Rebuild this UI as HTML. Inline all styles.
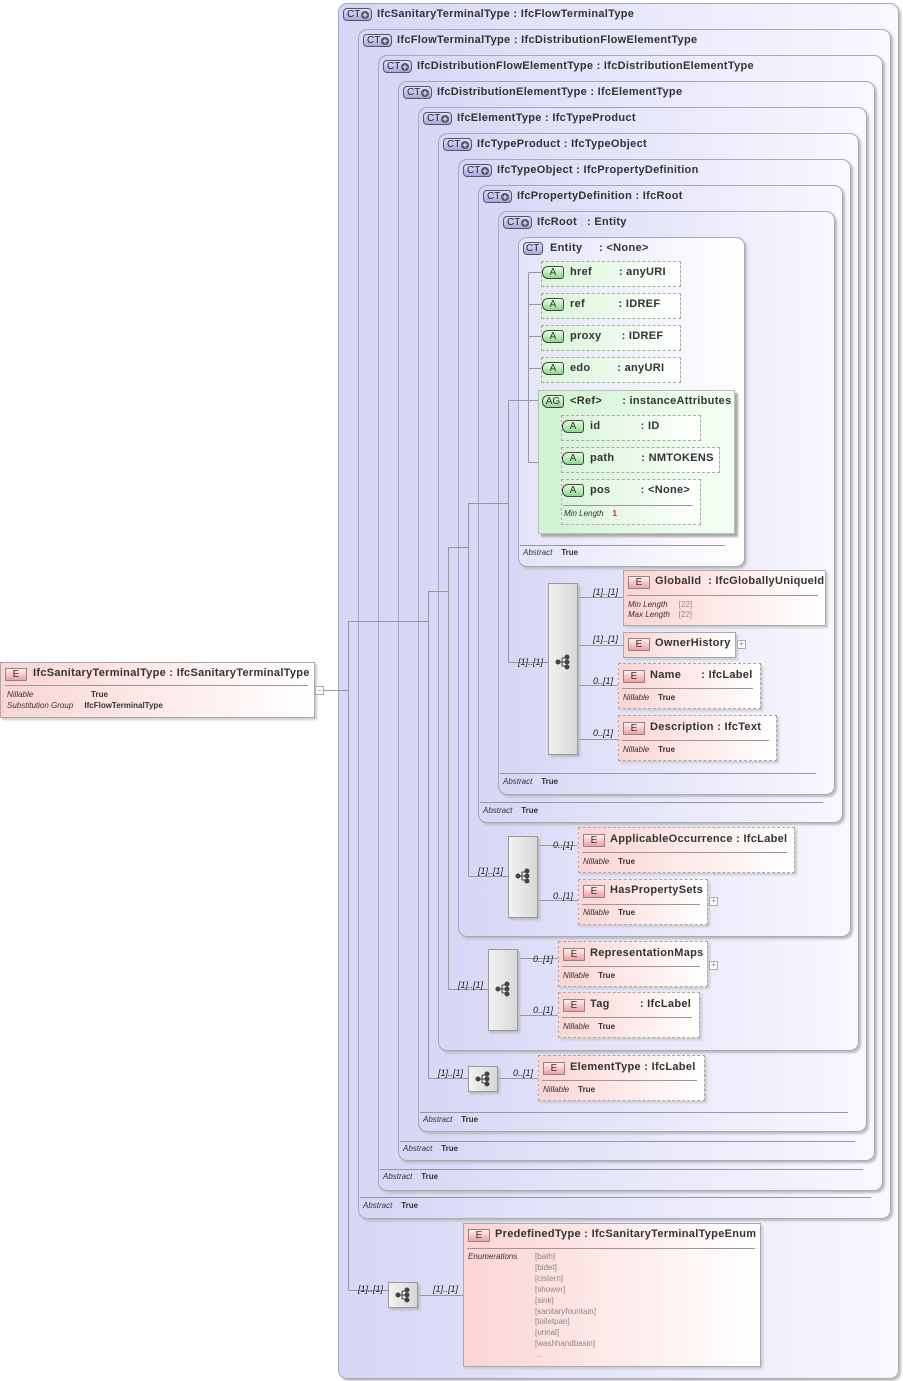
<!DOCTYPE html>
<html><head><meta charset="utf-8"><style>
*{margin:0;padding:0;box-sizing:border-box}
body{width:903px;height:1381px;background:#fff;position:relative;overflow:hidden;font-family:"Liberation Sans",sans-serif;font-size:11px;font-weight:bold;color:#333}
.ct{position:absolute;border:1px solid #a8a8b8;border-radius:9px;background:linear-gradient(to right,#d6d6f6,#f8f8ff);box-shadow:2px 2px 2px #bbb}
.h{position:absolute;white-space:pre;line-height:13px;margin-top:1px;letter-spacing:0.3px}
.bct{position:absolute;width:29px;height:13px;border:1px solid #556;border-radius:4px;background:linear-gradient(#e0e0fa,#a8a8e0);font-size:10px;font-weight:normal;color:#223;line-height:11px;padding-left:3px}
.bct b{position:absolute;right:2px;top:2px;width:8px;height:8px;border-radius:50%;background:#556;color:#fff;font-size:9px;line-height:8px;text-align:center}
.el{position:absolute;border:1px solid #aaa;background:linear-gradient(to right,#fcd4d4,#fff);box-shadow:2px 2px 2px #ccc}
.el.d{border:1px dashed #aaa}
.be{position:absolute;width:22px;height:13px;border:1px solid #888;background:linear-gradient(#fff0f0,#f0a0a0);font-size:10px;font-weight:normal;text-align:center;line-height:11px;color:#333}
.at{position:absolute;border:1px dashed #aaa;background:linear-gradient(to right,#d8f4d8,#fff)}
.ba{position:absolute;width:22px;height:13px;border:1px solid #444;border-radius:6px 3px 3px 6px;background:linear-gradient(#e8ffe8,#8ed88e);font-size:10px;font-weight:normal;text-align:center;line-height:11px}
.sm{position:absolute;font-size:8px;white-space:pre;line-height:10px;margin-top:1px}
.sm i{font-style:italic;font-weight:normal}
.seq{position:absolute;border:1px solid #999;background:linear-gradient(to right,#f2f2f2,#d8d8d8);box-shadow:2px 2px 2px #bbb}
.card{position:absolute;font-size:9px;font-style:italic;font-weight:normal;color:#222}
.pl{position:absolute;width:9px;height:9px;border:1px solid #aaa;background:#fff;font-size:9px;line-height:7px;text-align:center;color:#888;font-weight:normal}
</style></head><body>

<div class="ct" style="left:338px;top:3px;width:561px;height:1376px"></div>
<div class="ct" style="left:358px;top:29px;width:533px;height:1190px"></div>
<div class="ct" style="left:378px;top:55px;width:505px;height:1136px"></div>
<div class="ct" style="left:398px;top:81px;width:477px;height:1080px"></div>
<div class="ct" style="left:418px;top:107px;width:449px;height:1025px"></div>
<div class="ct" style="left:438px;top:133px;width:421px;height:918px"></div>
<div class="ct" style="left:458px;top:159px;width:393px;height:778px"></div>
<div class="ct" style="left:478px;top:185px;width:365px;height:638px"></div>
<div class="ct" style="left:498px;top:211px;width:337px;height:584px"></div>
<div class="ct" style="left:518px;top:237px;width:227px;height:330px;background:linear-gradient(to right,#e4e4fa,#fff)"></div>

<svg style="position:absolute;left:0;top:0" width="903" height="1381">
<g stroke="#999" fill="none" stroke-width="1">
<path d="M323.5 690.5H348.5M348.5 1290.5V621.5H428.5M428.5 1078.5V591.5H448.5M448.5 989.5V547.5H468.5M468.5 876.5V503.5H508.5M508.5 662.5V400.5H528.5M528.5 462.5V272.5"/>
<path d="M348.5 1290.5H388.5M418.5 1295.5H463.5M428.5 1078.5H468.5M498.5 1078.5H538.5M448.5 989.5H488.5M518.5 958.5H558.5M518.5 1015.5H558.5M468.5 876.5H508.5M538.5 845.5H578.5M538.5 900.5H578.5M508.5 662.5H548.5M578.5 597.5H623.5M578.5 645.5H623.5M578.5 685.5H618.5M578.5 739.5H618.5"/>
<path d="M528.5 272.5H541.5M528.5 304.5H541.5M528.5 336.5H541.5M528.5 368.5H541.5M528.5 400.5H541.5M528.5 462.5H548.5M548.5 430.5V502.5M548.5 428.5H561.5M548.5 460.5H561.5M548.5 492.5H561.5"/>
<path d="M420 1112.5H848M400 1141.5H855M380 1169.5H863M360 1197.5H871M500 773.5H816M520 545.5H725M480 802.5H823"/>
</g></svg>

<div class="bct" style="left:343px;top:8px">CT<b>+</b></div><div class="h" style="left:377px;top:7px">IfcSanitaryTerminalType : IfcFlowTerminalType</div>
<div class="bct" style="left:363px;top:34px">CT<b>+</b></div><div class="h" style="left:397px;top:33px">IfcFlowTerminalType : IfcDistributionFlowElementType</div>
<div class="bct" style="left:383px;top:60px">CT<b>+</b></div><div class="h" style="left:417px;top:59px">IfcDistributionFlowElementType : IfcDistributionElementType</div>
<div class="bct" style="left:403px;top:86px">CT<b>+</b></div><div class="h" style="left:437px;top:85px">IfcDistributionElementType : IfcElementType</div>
<div class="bct" style="left:423px;top:112px">CT<b>+</b></div><div class="h" style="left:457px;top:111px">IfcElementType : IfcTypeProduct</div>
<div class="bct" style="left:443px;top:138px">CT<b>+</b></div><div class="h" style="left:477px;top:137px">IfcTypeProduct : IfcTypeObject</div>
<div class="bct" style="left:463px;top:164px">CT<b>+</b></div><div class="h" style="left:497px;top:163px">IfcTypeObject : IfcPropertyDefinition</div>
<div class="bct" style="left:483px;top:190px">CT<b>+</b></div><div class="h" style="left:517px;top:189px">IfcPropertyDefinition : IfcRoot</div>
<div class="bct" style="left:503px;top:216px">CT<b>+</b></div><div class="h" style="left:537px;top:215px">IfcRoot   : Entity</div>
<div class="bct" style="left:523px;top:242px;width:20px;padding-left:2px;">CT</div><div class="h" style="left:550px;top:241px">Entity     : &lt;None&gt;</div>

<div class="sm" style="left:523px;top:547px"><i>Abstract</i>    True</div>
<div class="sm" style="left:503px;top:776px"><i>Abstract</i>    True</div>
<div class="sm" style="left:483px;top:805px"><i>Abstract</i>    True</div>
<div class="sm" style="left:423px;top:1114px"><i>Abstract</i>    True</div>
<div class="sm" style="left:403px;top:1143px"><i>Abstract</i>    True</div>
<div class="sm" style="left:383px;top:1171px"><i>Abstract</i>    True</div>
<div class="sm" style="left:363px;top:1200px"><i>Abstract</i>    True</div>

<div class="at" style="left:541px;top:261px;width:140px;height:26px"></div><div class="ba" style="left:542px;top:266px">A</div><div class="h" style="left:570px;top:265px">href        : anyURI</div>
<div class="at" style="left:541px;top:293px;width:140px;height:26px"></div><div class="ba" style="left:542px;top:298px">A</div><div class="h" style="left:570px;top:297px">ref          : IDREF</div>
<div class="at" style="left:541px;top:325px;width:140px;height:26px"></div><div class="ba" style="left:542px;top:330px">A</div><div class="h" style="left:570px;top:329px">proxy      : IDREF</div>
<div class="at" style="left:541px;top:357px;width:140px;height:26px"></div><div class="ba" style="left:542px;top:362px">A</div><div class="h" style="left:570px;top:361px">edo        : anyURI</div>
<div style="position:absolute;left:538px;top:390px;width:197px;height:144px;border:1px solid #bbb;background:linear-gradient(to right,#d0f4d0,#f4fff4);box-shadow:3px 3px 2px #aaa"></div>
<div class="ba" style="left:542px;top:395px">AG</div><div class="h" style="left:570px;top:394px">&lt;Ref&gt;      : instanceAttributes</div>
<div class="at" style="left:561px;top:415px;width:140px;height:26px"></div><div class="ba" style="left:562px;top:420px">A</div><div class="h" style="left:590px;top:419px">id            : ID</div>
<div class="at" style="left:561px;top:447px;width:159px;height:26px"></div><div class="ba" style="left:562px;top:452px">A</div><div class="h" style="left:590px;top:451px">path        : NMTOKENS</div>
<div class="at" style="left:561px;top:479px;width:140px;height:46px"></div><div class="ba" style="left:562px;top:484px">A</div><div class="h" style="left:590px;top:483px">pos         : &lt;None&gt;</div>
<div style="position:absolute;left:563px;top:505px;width:130px;border-top:1px solid #999"></div>
<div class="sm" style="left:564px;top:508px"><i>Min Length</i>    <span style="color:#d22">1</span></div>

<div class="el" style="left:0;top:662px;width:315px;height:56px"></div>
<div class="be" style="left:5px;top:668px">E</div><div class="h" style="left:33px;top:666px">IfcSanitaryTerminalType : IfcSanitaryTerminalType</div>
<div style="position:absolute;left:5px;top:685px;width:303px;border-top:1px solid #999"></div>
<div class="sm" style="left:7px;top:689px"><i>Nillable</i>                          True</div>
<div class="sm" style="left:7px;top:700px"><i>Substitution Group</i>     IfcFlowTerminalType</div>
<div class="pl" style="left:315px;top:686px">−</div>

<div class="seq" style="left:548px;top:583px;width:30px;height:172px"></div>
<div class="seq" style="left:508px;top:836px;width:30px;height:82px"></div>
<div class="seq" style="left:488px;top:949px;width:30px;height:82px"></div>
<div class="seq" style="left:468px;top:1066px;width:30px;height:26px"></div>
<div class="seq" style="left:388px;top:1282px;width:30px;height:26px"></div>
<svg style="position:absolute;left:0;top:0" width="903" height="1381"><g fill="#444" stroke="#444">
<g id="ic" transform="translate(556,662)"><circle cx="2" cy="0" r="2"/><path d="M2 0H6M6-4V4M6-4H10M6 0H10M6 4H10" fill="none"/><circle cx="11" cy="-5" r="2"/><circle cx="11" cy="0" r="2"/><circle cx="11" cy="5" r="2"/></g>
<use href="#ic" x="-40" y="214"/><use href="#ic" x="-60" y="327"/><use href="#ic" x="-80" y="417"/><use href="#ic" x="-160" y="633"/>
</g></svg>

<div class="card" style="left:518px;top:657px">[1]..[1]</div>
<div class="card" style="left:593px;top:587px">[1]..[1]</div>
<div class="card" style="left:593px;top:634px">[1]..[1]</div>
<div class="card" style="left:593px;top:676px">0..[1]</div>
<div class="card" style="left:593px;top:728px">0..[1]</div>
<div class="card" style="left:478px;top:866px">[1]..[1]</div>
<div class="card" style="left:553px;top:840px">0..[1]</div>
<div class="card" style="left:553px;top:891px">0..[1]</div>
<div class="card" style="left:458px;top:980px">[1]..[1]</div>
<div class="card" style="left:533px;top:954px">0..[1]</div>
<div class="card" style="left:533px;top:1005px">0..[1]</div>
<div class="card" style="left:438px;top:1068px">[1]..[1]</div>
<div class="card" style="left:513px;top:1068px">0..[1]</div>
<div class="card" style="left:358px;top:1284px">[1]..[1]</div>
<div class="card" style="left:433px;top:1284px">[1]..[1]</div>

<div class="el" style="left:623px;top:570px;width:203px;height:56px"></div>
<div class="be" style="left:628px;top:576px">E</div><div class="h" style="left:655px;top:574px">GlobalId  : IfcGloballyUniqueId</div>
<div style="position:absolute;left:627px;top:595px;width:191px;border-top:1px solid #999"></div>
<div class="sm" style="left:628px;top:599px"><i>Min Length</i>     <span style="color:#888;font-weight:normal">[22]</span></div>
<div class="sm" style="left:628px;top:609px"><i>Max Length</i>    <span style="color:#888;font-weight:normal">[22]</span></div>

<div class="el" style="left:623px;top:632px;width:113px;height:26px"></div>
<div class="be" style="left:628px;top:638px">E</div><div class="h" style="left:655px;top:636px">OwnerHistory</div>
<div class="pl" style="left:737px;top:640px">+</div>

<div class="el d" style="left:618px;top:663px;width:143px;height:46px"></div>
<div class="be" style="left:623px;top:670px">E</div><div class="h" style="left:650px;top:668px">Name      : IfcLabel</div>
<div style="position:absolute;left:622px;top:688px;width:131px;border-top:1px solid #999"></div>
<div class="sm" style="left:623px;top:692px"><i>Nillable</i>    True</div>

<div class="el d" style="left:618px;top:715px;width:159px;height:46px"></div>
<div class="be" style="left:623px;top:722px">E</div><div class="h" style="left:650px;top:720px">Description : IfcText</div>
<div style="position:absolute;left:622px;top:740px;width:147px;border-top:1px solid #999"></div>
<div class="sm" style="left:623px;top:744px"><i>Nillable</i>    True</div>

<div class="el d" style="left:578px;top:827px;width:217px;height:46px"></div>
<div class="be" style="left:583px;top:834px">E</div><div class="h" style="left:610px;top:832px">ApplicableOccurrence : IfcLabel</div>
<div style="position:absolute;left:582px;top:852px;width:205px;border-top:1px solid #999"></div>
<div class="sm" style="left:583px;top:856px"><i>Nillable</i>    True</div>

<div class="el d" style="left:578px;top:879px;width:130px;height:46px"></div>
<div class="be" style="left:583px;top:885px">E</div><div class="h" style="left:610px;top:883px">HasPropertySets</div>
<div style="position:absolute;left:582px;top:904px;width:118px;border-top:1px solid #999"></div>
<div class="sm" style="left:583px;top:907px"><i>Nillable</i>    True</div>
<div class="pl" style="left:709px;top:897px">+</div>

<div class="el d" style="left:558px;top:941px;width:150px;height:46px"></div>
<div class="be" style="left:563px;top:948px">E</div><div class="h" style="left:590px;top:946px">RepresentationMaps</div>
<div style="position:absolute;left:562px;top:966px;width:138px;border-top:1px solid #999"></div>
<div class="sm" style="left:563px;top:970px"><i>Nillable</i>    True</div>
<div class="pl" style="left:709px;top:961px">+</div>

<div class="el d" style="left:558px;top:992px;width:142px;height:46px"></div>
<div class="be" style="left:563px;top:999px">E</div><div class="h" style="left:590px;top:997px">Tag         : IfcLabel</div>
<div style="position:absolute;left:562px;top:1017px;width:130px;border-top:1px solid #999"></div>
<div class="sm" style="left:563px;top:1021px"><i>Nillable</i>    True</div>

<div class="el d" style="left:538px;top:1055px;width:167px;height:46px"></div>
<div class="be" style="left:543px;top:1062px">E</div><div class="h" style="left:570px;top:1060px">ElementType : IfcLabel</div>
<div style="position:absolute;left:542px;top:1080px;width:155px;border-top:1px solid #999"></div>
<div class="sm" style="left:543px;top:1084px"><i>Nillable</i>    True</div>

<div class="el" style="left:463px;top:1223px;width:298px;height:144px"></div>
<div class="be" style="left:468px;top:1229px">E</div><div class="h" style="left:495px;top:1227px">PredefinedType : IfcSanitaryTerminalTypeEnum</div>
<div style="position:absolute;left:467px;top:1248px;width:288px;border-top:1px solid #999"></div>
<div class="sm" style="left:468px;top:1251px"><i>Enumerations</i></div>
<div class="sm" style="left:535px;top:1251px;color:#888;font-weight:normal;line-height:10.9px">[bath]
[bidet]
[cistern]
[shower]
[sink]
[sanitaryfountain]
[toiletpan]
[urinal]
[washhandbasin]
...</div>
</body></html>
